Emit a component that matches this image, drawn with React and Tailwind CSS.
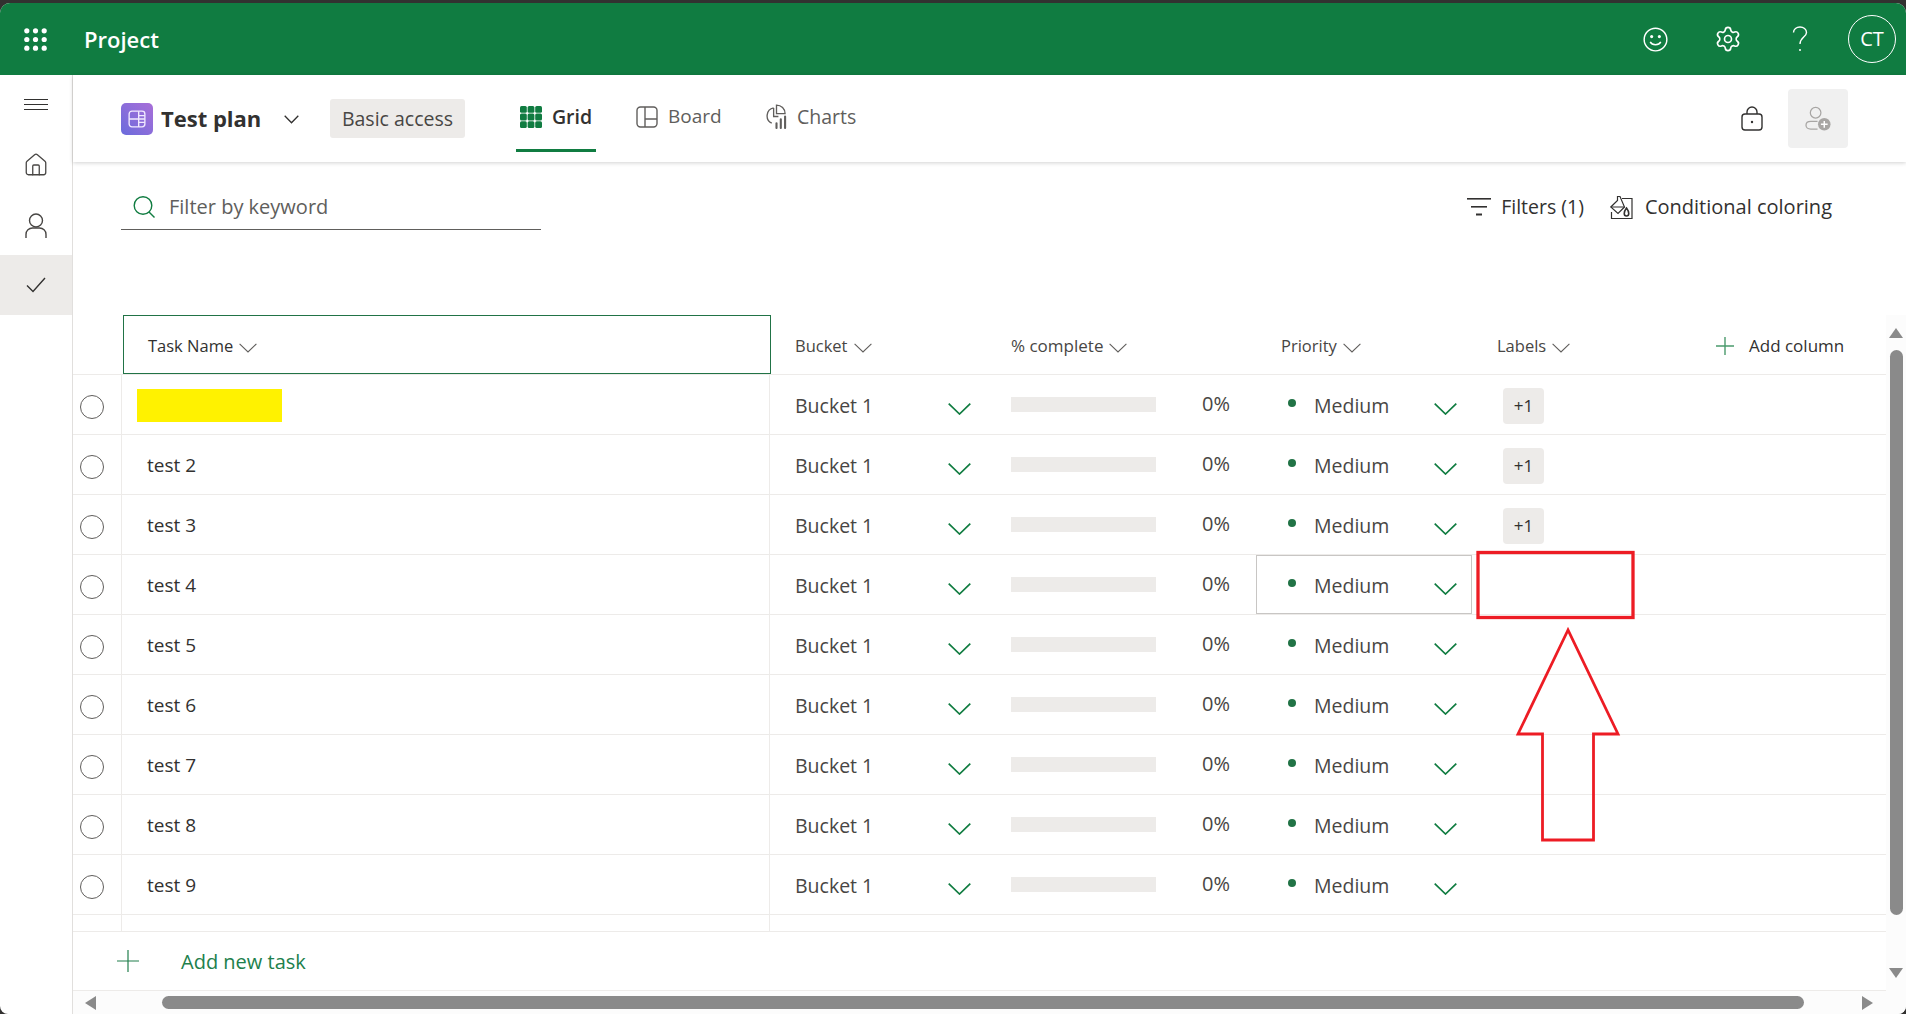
import React from "react";
import { Settings, House } from "lucide-react";

const font = "font-['Open_Sans','Noto_Sans',sans-serif]";

function Chev({ className = "w-[23px] h-[12px] text-[#107c41]" }) {
  return (
    <svg viewBox="0 0 23 12" className={className} fill="none" stroke="currentColor" strokeWidth="1.7">
      <path d="M0.7 0.7 L11.5 11 L22.3 0.7" />
    </svg>
  );
}
function HeadChev() {
  return (
    <svg viewBox="0 0 18 10" className="w-[18px] h-[10px] text-[#605e5c] ml-[6px] mt-[3px]" fill="none" stroke="currentColor" strokeWidth="1.1">
      <path d="M0.6 0.8 L9 9 L17.4 0.8" />
    </svg>
  );
}
function Waffle() {
  const pts = [0, 1, 2];
  return (
    <svg viewBox="0 0 23 23" className="w-[23px] h-[23px]" fill="#fff">
      {pts.map((r) => pts.map((c) => <circle key={`${r}${c}`} cx={2.8 + c * 8.7} cy={2.8 + r * 8.7} r="2.6" />))}
    </svg>
  );
}
function Person({ className, color = "currentColor" }) {
  return (
    <svg viewBox="0 0 22 25" className={className} fill="none" stroke={color} strokeWidth="1.4">
      <circle cx="11" cy="7.5" r="6.5" />
      <path d="M1 25 V21.5 C1 17.5 4 15 7.5 15 H14.5 C18 15 21 17.5 21 21.5 V25" />
    </svg>
  );
}

const rows = ["", "test 2", "test 3", "test 4", "test 5", "test 6", "test 7", "test 8", "test 9"];
const rowGrid = "grid grid-cols-[49px_648px_241px_245px_216px_1fr]";

function Row({ name, i }) {
  return (
    <div className={`${rowGrid} h-[60px] border-b border-[#edebe9] relative`}>
      <div className="flex items-center justify-center border-r border-[#edebe9]">
        <div className="w-[24px] h-[24px] rounded-full border-[1.5px] border-[#605e5c] ml-[-10px] mt-[4px]" />
      </div>
      <div className="flex items-center pl-[25px] border-r border-[#edebe9]">
        {i === 0 ? (
          <div className="w-[145px] h-[33px] bg-[#fff200] ml-[-10px] mt-[2px]" />
        ) : (
          <span className="text-[19px] text-[#323130] mt-[1px]">{name}</span>
        )}
      </div>
      <div className="flex items-center pl-[25px] pr-[40px] justify-between">
        <span className="text-[19.5px] text-[#484644] mt-[2px]">Bucket 1</span>
        <Chev className="w-[23px] h-[12px] text-[#107c41] mt-[9px]" />
      </div>
      <div className="flex items-center">
        <div className="w-[145px] h-[15px] bg-[#edebe9] mt-[-1px]" />
        <span className="text-[20px] text-[#484644] ml-[46px] mb-[2px]">0%</span>
      </div>
      <div className={`flex items-center ${i === 3 ? "border border-[#c8c6c4] pl-[31px] pr-[14px]" : "pl-[32px] pr-[15px]"}`}>
        <span className="w-[8px] h-[8px] rounded-full bg-[#217346] mb-[3px]" />
        <span className="text-[19.5px] text-[#484644] ml-[18px] mt-[2px]">Medium</span>
        <Chev className="w-[23px] h-[12px] text-[#107c41] ml-auto mt-[9px]" />
      </div>
      <div className="flex items-center pl-[31px]">
        {i < 3 && (
          <div className="w-[41px] h-[36px] rounded-[4px] bg-[#edebe9] flex items-center justify-center text-[17px] text-[#323130] mt-[2px]">+1</div>
        )}
      </div>
    </div>
  );
}

export default function App() {
  return (
    <div className={`${font} w-[1906px] h-[1014px] bg-[#323130] pt-[3px] overflow-hidden relative`}>
      <div className="h-[1011px] bg-white rounded-t-[10px] rounded-b-[8px] overflow-hidden flex flex-col">
        {/* Top bar */}
        <header className="h-[72px] shrink-0 bg-[#107c41] text-white flex items-center">
          <div className="w-[71px] flex justify-center"><Waffle /></div>
          <span className="text-[22px] font-semibold ml-[13px]">Project</span>
          <div className="ml-auto flex items-center">
            <svg viewBox="0 0 26 26" className="w-[25px] h-[25px]" fill="none" stroke="#fff" strokeWidth="1.5">
              <circle cx="13" cy="13" r="11.8" />
              <circle cx="9" cy="10" r="1.6" fill="#fff" stroke="none" />
              <circle cx="17" cy="10" r="1.6" fill="#fff" stroke="none" />
              <path d="M7.5 15.5 C9.5 19.5 16.5 19.5 18.5 15.5" />
            </svg>
            <Settings className="w-[28px] h-[28px] ml-[46px]" strokeWidth={1.4} />
            <svg viewBox="0 0 16 26" className="w-[16px] h-[26px] ml-[50px]" fill="none" stroke="#fff" strokeWidth="1.4">
              <path d="M1.5 6.5 C1.5 3 4.5 1 8 1 C11.5 1 14.5 3.3 14.5 6.5 C14.5 11 8 11.5 8 18" />
              <circle cx="8" cy="24" r="1" fill="#fff" stroke="none" />
            </svg>
            <div className="w-[48px] h-[48px] rounded-full border border-white flex items-center justify-center text-[20px] ml-[40px] mr-[10px]">CT</div>
          </div>
        </header>

        <div className="flex-1 flex min-h-0">
          {/* Rail */}
          <nav className="w-[73px] shrink-0 border-r border-[#e1dfdd] flex flex-col">
            <div className="h-[60px] flex items-center justify-center">
              <div className="w-[24px] flex flex-col gap-[4px] mb-[2px]">
                <div className="h-px bg-[#323130]" /><div className="h-px bg-[#323130]" /><div className="h-px bg-[#323130]" />
              </div>
            </div>
            <div className="h-[60px] flex items-center justify-center"><House className="w-[26px] h-[26px] text-[#484644]" strokeWidth={1.2} /></div>
            <div className="h-[60px] flex items-center justify-center"><Person className="w-[22px] h-[25px] text-[#484644]" /></div>
            <div className="h-[60px] bg-[#edebe9] flex items-center justify-center">
              <svg viewBox="0 0 20 16" className="w-[20px] h-[16px]" fill="none" stroke="#323130" strokeWidth="1.4"><path d="M1 8.5 L7 14.5 L19 1" /></svg>
            </div>
          </nav>

          <main className="flex-1 min-w-0 flex flex-col">
            {/* Plan header */}
            <div className="h-[87px] shrink-0 flex items-center shadow-[0_1px_4px_rgba(0,0,0,0.18)] relative z-10">
              <div className="w-[32px] h-[32px] rounded-[5px] bg-gradient-to-tr from-[#6a6bdc] to-[#a86ed8] flex items-center justify-center ml-[48px]">
                <svg viewBox="0 0 16 16" className="w-[18px] h-[18px]" fill="none" stroke="#f1eaff" strokeWidth="1.2">
                  <rect x="1" y="1" width="14" height="14" rx="2.5" />
                  <path d="M1 8 H15 M9.5 1 V15 M9.5 5 H15 M9.5 11 H15" />
                </svg>
              </div>
              <span className="w-[99px] text-[22px] leading-none font-bold text-[#323130] ml-[8px] mb-[1px] whitespace-nowrap">Test plan</span>
              <svg viewBox="0 0 15 9" className="w-[15px] h-[9px] ml-[24px] mt-[2px]" fill="none" stroke="#323130" strokeWidth="1.3"><path d="M0.7 0.7 L7.5 7.8 L14.3 0.7" /></svg>
              <div className="h-[39px] w-[135px] rounded-[3px] bg-[#edebe9] text-[19.5px] text-[#484644] flex items-center justify-center ml-[31px]">Basic access</div>
              <div className="h-full w-[80px] flex items-center justify-center relative ml-[51px]">
                <div className="flex items-center gap-[10px] mb-[4px]">
                  <svg viewBox="0 0 22 22" className="w-[22px] h-[22px]" fill="#107c41">
                    {[0, 1, 2].map((r) => [0, 1, 2].map((c) => (
                      <rect key={`${r}${c}`} x={c * 7.6} y={r * 7.6} width="6.8" height="6.8" rx="1.5" />
                    )))}
                  </svg>
                  <span className="text-[19.5px] font-semibold text-[#323130]">Grid</span>
                </div>
                <div className="absolute left-0 right-0 bottom-[10px] h-[3px] bg-[#107c41]" />
              </div>
              <div className="flex items-center gap-[10px] ml-[40px] mb-[4px] w-[130px] text-[#605e5c]">
                <svg viewBox="0 0 22 22" className="w-[22px] h-[22px]" fill="none" stroke="#605e5c" strokeWidth="1.4">
                  <rect x="1" y="1" width="20" height="20" rx="3.5" />
                  <path d="M9 1 V21 M9 13 H21" />
                </svg>
                <span className="text-[19px]">Board</span>
              </div>
              <div className="flex items-center gap-[10px] mb-[4px] text-[#605e5c]">
                <svg viewBox="0 0 22 26" className="w-[21px] h-[25px]" fill="none" stroke="#605e5c" strokeWidth="1.4">
                  <path d="M8 4 A8.5 8.5 0 0 0 6 20" />
                  <path d="M11 1 A9 9 0 0 1 20 10 H11 Z" />
                  <path d="M8 4 V13 H13" />
                  <path d="M11 25 V20 M15.5 25 V16 M20 25 V13" strokeWidth="2.2" strokeLinecap="round" />
                </svg>
                <span className="text-[19.5px]">Charts</span>
              </div>
              <svg viewBox="0 0 22 25" className="w-[22px] h-[25px] ml-auto" fill="none" stroke="#323130" strokeWidth="1.4">
                <path d="M6 8 V6 A5 5 0 0 1 16 6 V8" />
                <rect x="1" y="8" width="20" height="16" rx="3" />
                <circle cx="11" cy="16" r="1.2" fill="#323130" stroke="none" />
              </svg>
              <div className="w-[60px] h-[59px] rounded-[4px] bg-[#f0f0f0] flex items-center justify-center ml-[25px] mr-[58px] mt-[-1px]">
                <svg viewBox="0 0 28 26" className="w-[27px] h-[25px]" fill="none" stroke="#a8a6a4" strokeWidth="1.3">
                  <circle cx="11" cy="7" r="5.5" />
                  <path d="M13 24 H6 C3 24 1 22.5 1 20 C1 17.5 3 16 6 16 H13" />
                  <circle cx="20" cy="19" r="6.5" fill="#a8a6a4" stroke="none" />
                  <path d="M20 15.5 V22.5 M16.5 19 H23.5" stroke="#fff" strokeWidth="1.5" />
                </svg>
              </div>
            </div>

            {/* Toolbar */}
            <div className="h-[153px] shrink-0 flex items-start pt-[23px]">
              <div className="w-[420px] h-[45px] ml-[48px] border-b border-[#605e5c] flex items-center">
                <svg viewBox="0 0 22 22" className="w-[22px] h-[22px] ml-[12px]" fill="none" stroke="#107c41" strokeWidth="1.4">
                  <circle cx="10" cy="9.5" r="8.8" />
                  <path d="M16 16 L21.5 21.5" />
                </svg>
                <span className="text-[20px] text-[#605e5c] ml-[14px]">Filter by keyword</span>
              </div>
              <div className="ml-auto flex items-center h-[43px] mr-[74px] text-[#323130]">
                <svg viewBox="0 0 24 18" className="w-[24px] h-[18px]" fill="#323130">
                  <rect x="0" y="0" width="24" height="1.6" />
                  <rect x="4" y="8" width="16" height="1.6" />
                  <rect x="9" y="15.5" width="6" height="2" />
                </svg>
                <span className="text-[19.5px] ml-[10px]">Filters (1)</span>
                <svg viewBox="0 0 23 24" className="w-[23px] h-[24px] ml-[26px]" fill="none" stroke="#323130" strokeWidth="1.2">
                  <path d="M12 3.5 H22 V23.5 H1.5 V17" />
                  <path d="M0.8 12 L7.5 5.5 V1.5 H10 L14.5 12 L8 18.5 Z" />
                  <path d="M0.8 12 H14.5" />
                  <path d="M16.5 13 C13.5 17 13.5 21 16.5 21 C19.5 21 19.5 17 16.5 13 Z" strokeWidth="1.6" />
                </svg>
                <span className="text-[20px] ml-[12px]">Conditional coloring</span>
              </div>
            </div>

            {/* Grid */}
            <div className="flex-1 min-h-0 flex">
              <div className="flex-1 min-w-0 flex flex-col">
                <div className="flex-1 min-h-0">
                  <div className="h-[60px] flex items-stretch border-b border-[#edebe9] text-[16.5px] text-[#484644]">
                    <div className="ml-[50px] w-[648px] border border-[#217346] flex items-center pl-[24px] pt-[3px] text-[#323130]">
                      <span>Task Name</span><HeadChev />
                    </div>
                    <div className="w-[240px] flex items-center pl-[24px] pt-[3px]"><span>Bucket</span><HeadChev /></div>
                    <div className="w-[270px] flex items-center pt-[3px]"><span className="text-[17px]">% complete</span><HeadChev /></div>
                    <div className="w-[216px] flex items-center pt-[3px]"><span>Priority</span><HeadChev /></div>
                    <div className="w-[219px] flex items-center pt-[3px]"><span>Labels</span><HeadChev /></div>
                    <div className="flex items-center pt-[3px]">
                      <svg viewBox="0 0 18 18" className="w-[18px] h-[18px] mr-[15px]" fill="none" stroke="#4a9a6c" strokeWidth="1.4"><path d="M9 0 V18 M0 9 H18" /></svg>
                      <span className="text-[#323130] text-[17px]">Add column</span>
                    </div>
                  </div>
                  {rows.map((r, i) => <Row key={i} name={r} i={i} />)}
                  <div className={`${rowGrid} h-[17px] border-b border-[#edebe9]`}>
                    <div className="border-r border-[#edebe9]" /><div className="border-r border-[#edebe9]" />
                  </div>
                </div>
                <div className="h-[59px] shrink-0 border-b border-[#edebe9] flex items-center">
                  <svg viewBox="0 0 22 22" className="w-[22px] h-[22px] ml-[44px]" fill="none" stroke="#217f4c" strokeWidth="1.2"><path d="M11 0 V22 M0 11 H22" /></svg>
                  <span className="text-[20px] text-[#217f4c] ml-[42px] mt-[1px]">Add new task</span>
                </div>
              </div>
              {/* Vertical scrollbar */}
              <div className="w-[20px] shrink-0 bg-[#fcfcfc] flex flex-col items-center">
                <div className="w-0 h-0 border-x-[7px] border-x-transparent border-b-[10px] border-b-[#8a8a8a] mt-[13px]" />
                <div className="w-[13px] h-[565px] bg-[#8a8a8a] rounded-full mt-[12px]" />
                <div className="w-0 h-0 border-x-[7px] border-x-transparent border-t-[10px] border-t-[#8a8a8a] mt-[53px]" />
              </div>
            </div>
            {/* Horizontal scrollbar */}
            <div className="h-[23px] shrink-0 bg-[#fcfcfc] flex items-center">
              <div className="w-0 h-0 border-y-[7px] border-y-transparent border-r-[11px] border-r-[#8a8a8a] ml-[12px]" />
              <div className="w-[1642px] h-[13px] rounded-full bg-[#8a8a8a] ml-[66px]" />
              <div className="w-0 h-0 border-y-[7px] border-y-transparent border-l-[11px] border-l-[#8a8a8a] ml-[58px]" />
            </div>
          </main>
        </div>
      </div>

      {/* Red annotation drawn over the page */}
      <svg className="absolute left-0 top-0 pointer-events-none" width="1906" height="1014" fill="none" stroke="#ed1c24">
        <rect x="1478" y="552.5" width="155" height="65" strokeWidth="3.3" />
        <path d="M1568 630 L1518 734 H1542.5 V840 H1593.5 V734 H1618 Z" strokeWidth="2.8" strokeLinejoin="miter" />
      </svg>
    </div>
  );
}
